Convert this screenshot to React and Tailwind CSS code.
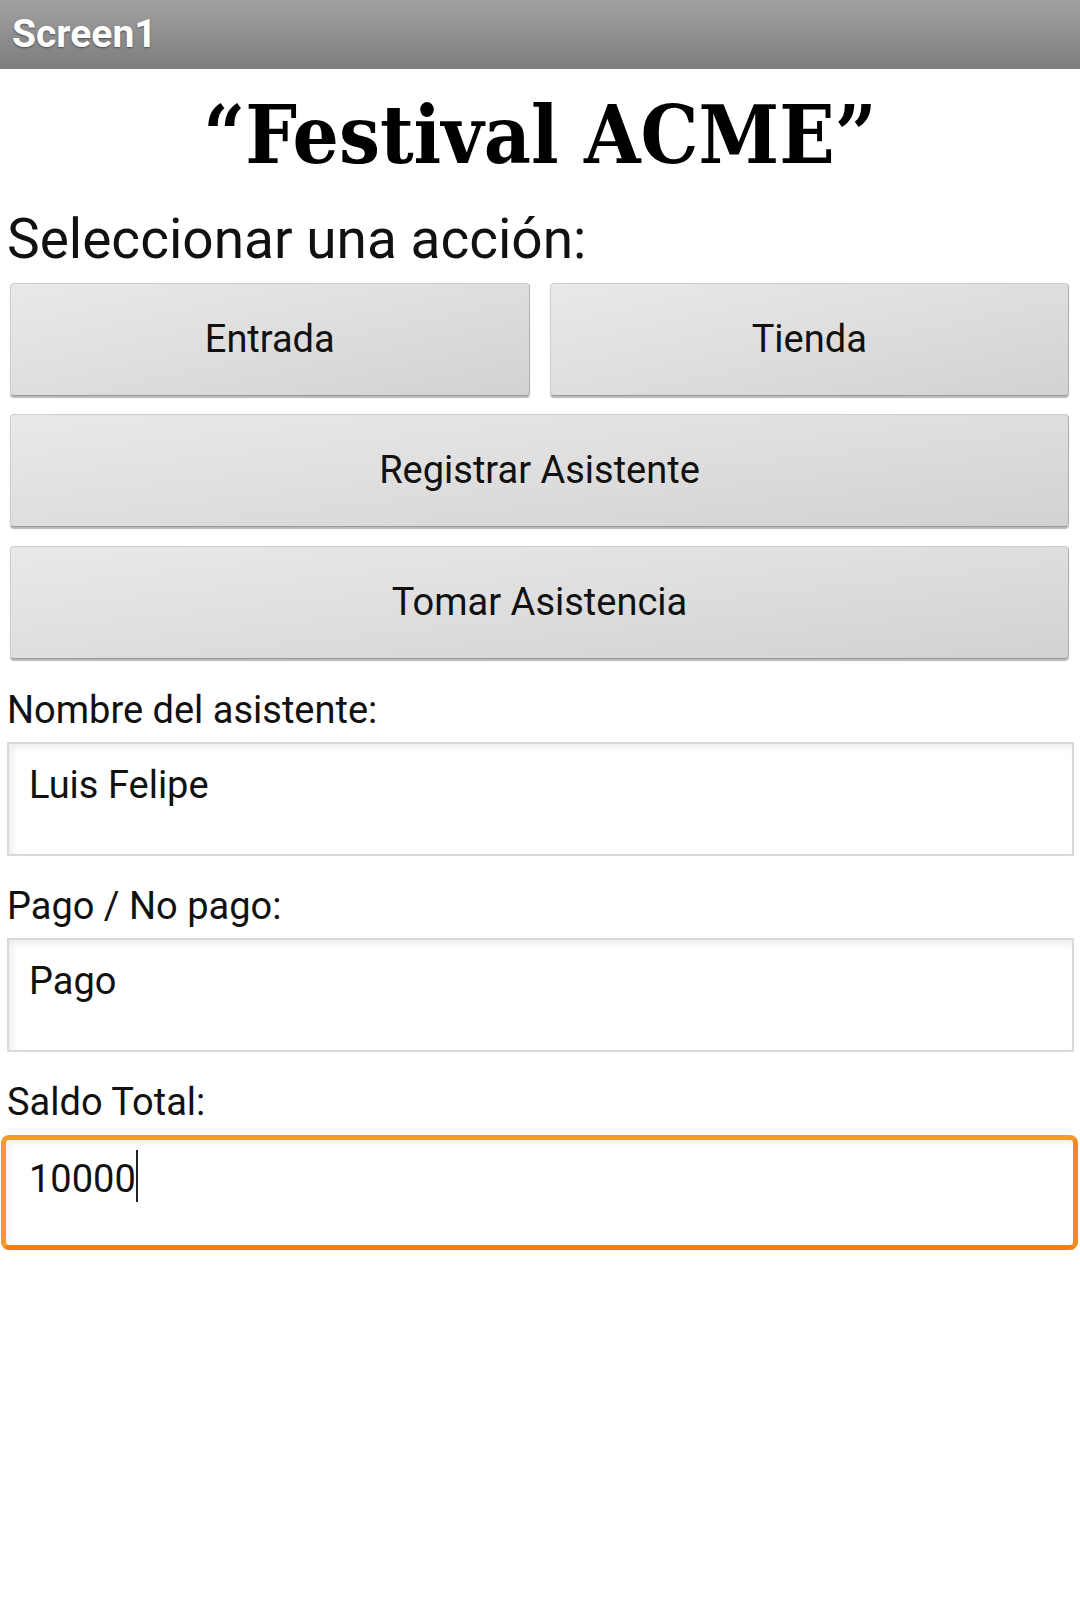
import React from 'react'

const BUTTON =
  'flex items-center justify-center h-[113px] rounded-[4px] border border-[#cdcdcd] border-b-[#9a9a9a] border-r-[#b0b0b0] bg-gradient-to-br from-[#e9e9e9] via-[#dedede] to-[#d2d2d2] shadow-[0_2px_1px_rgba(0,0,0,0.28)] text-[38px] text-[#111]'

const BOX =
  'ml-[7px] mr-[6px] h-[114px] border-2 border-[#dadada] bg-white shadow-[inset_3px_4px_6px_rgba(0,0,0,0.07)] pl-[20px] pt-[20px] text-[38px] leading-[43px] text-[#111]'

function Label({ children }) {
  return <p className="pl-[7px] text-[38px] leading-[43px] text-[#111]">{children}</p>
}

export default function App() {
  return (
    <div className="min-h-[1601px] bg-white font-['Roboto',sans-serif]">
      <div className="h-[69px] flex items-center pl-[12px] bg-gradient-to-b from-[#a1a1a1] to-[#7d7d7d]">
        <span className="text-[39px] font-bold text-white [text-shadow:0_1px_2px_rgba(0,0,0,0.45)]">
          Screen1
        </span>
      </div>

      <h1 className="pt-[25px] text-center font-['DejaVu_Serif',serif] font-bold font-stretch-condensed text-[81px] leading-none text-black">
        “Festival ACME”
      </h1>

      <p className="mt-[32px] pl-[7px] text-[55px] leading-[64px] text-[#111]">
        Seleccionar una acción:
      </p>

      <div className="mt-[12px] pl-[10px] pr-[11px] flex flex-col">
        <div className="grid grid-cols-2 gap-x-[20px]">
          <button className={BUTTON}>Entrada</button>
          <button className={BUTTON}>Tienda</button>
        </div>
        <button className={`${BUTTON} mt-[18px]`}>Registrar Asistente</button>
        <button className={`${BUTTON} mt-[19px]`}>Tomar Asistencia</button>
      </div>

      <div className="mt-[30px]">
        <Label>Nombre del asistente:</Label>
        <div className={`${BOX} mt-[10px]`}>Luis Felipe</div>
      </div>

      <div className="mt-[29px]">
        <Label>Pago / No pago:</Label>
        <div className={`${BOX} mt-[10px] h-[113px]`}>Pago</div>
      </div>

      <div className="mt-[29px]">
        <Label>Saldo Total:</Label>
        <div className="mt-[11px] ml-[1px] mr-[2px] h-[115px] rounded-[8px] border-[5px] border-[#f39a2c] border-b-[#ec8216] border-r-[#ef8a1e] bg-white shadow-[inset_3px_4px_6px_rgba(0,0,0,0.06)] pl-[23px] pt-[18px] text-[38px] leading-[43px] text-[#111]">
          10000
          <span className="inline-block w-[2px] h-[52px] -mt-[10px] bg-[#222] align-[-10px]" />
        </div>
      </div>
    </div>
  )
}
